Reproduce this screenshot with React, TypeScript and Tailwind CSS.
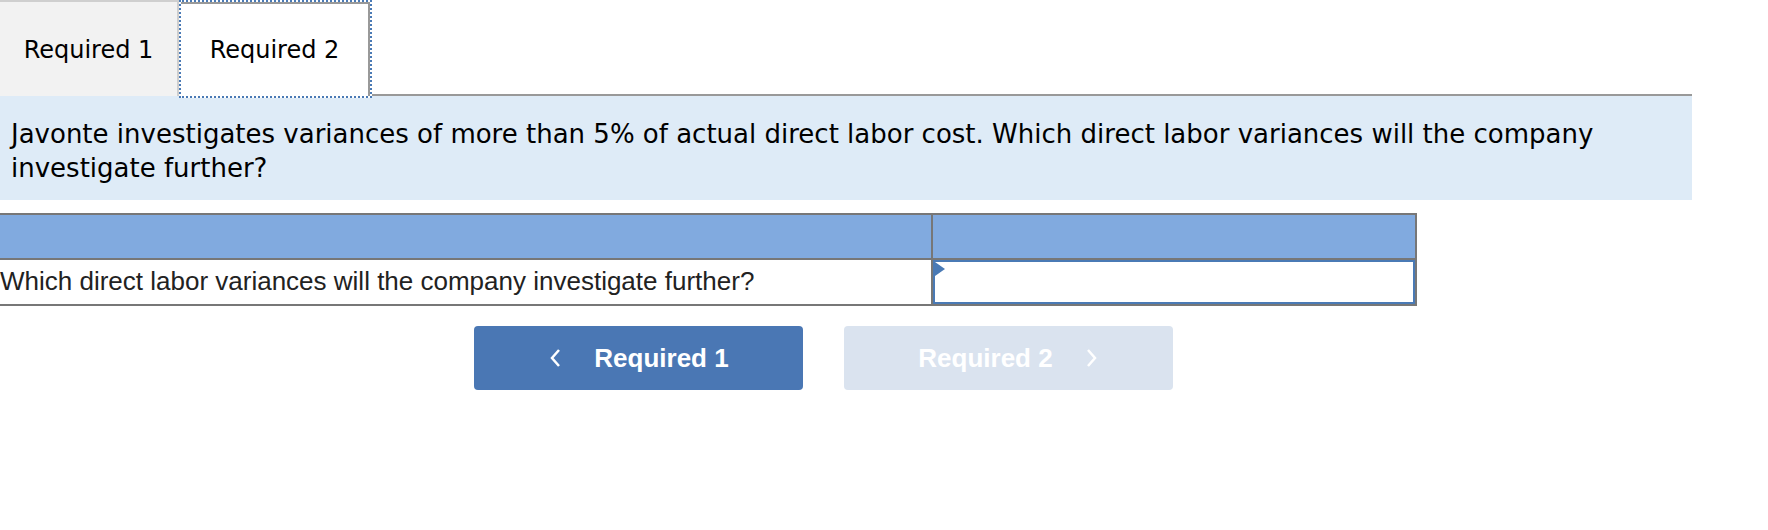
import React from "react";

export default function App() {
  return (
    <div className="w-[1768px] h-[530px] bg-white overflow-hidden font-['DejaVu_Sans',Verdana,sans-serif] text-black">
      <div className="w-[1692px]">
        <div className="flex h-[96px] border-b-2 border-[#999]">
          <div className="w-[179px] h-[96px] bg-[#f2f2f2] border-t-2 border-r-2 border-[#cfcfcf] flex items-center justify-center text-[24px] pt-[2px]">
            Required 1
          </div>
          <div className="w-[193px] h-[98px] bg-white border-2 border-dotted border-[#4a7ab5] flex">
            <div className="flex-1 border-t-2 border-r-2 border-[#999] flex items-center justify-center text-[24px]">
              Required 2
            </div>
          </div>
        </div>
        <div className="bg-[#deebf7] h-[104px] px-[11px] pt-[21px] text-[26px] leading-[34px]">
          Javonte investigates variances of more than 5% of actual direct labor cost. Which direct labor variances will the company investigate further?
        </div>
      </div>
      <div className="mt-[13px] ml-[-3px] w-[1420px] border-2 border-[#777] font-['Liberation_Sans',Arial,sans-serif]">
        <div className="flex h-[45px] bg-[#81aadf] border-b-2 border-[#777]">
          <div className="w-[934px] border-r-2 border-[#777]"></div>
          <div className="flex-1"></div>
        </div>
        <div className="flex h-[44px]">
          <div className="w-[934px] border-r-2 border-[#777] flex items-center text-[26px] text-[#222] pl-[1px] pb-[2px] whitespace-nowrap">
            Which direct labor variances will the company investigate further?
          </div>
          <div className="flex-1 p-0">
            <div className="relative h-full border-2 border-[#4a7ab5] bg-white">
              <svg className="absolute left-0 top-0" width="10" height="14" viewBox="0 0 10 14">
                <polygon points="0,0 10,7 0,14" fill="#4a7ab5" />
              </svg>
            </div>
          </div>
        </div>
      </div>
      <div className="flex gap-[41px] ml-[474px] mt-[20px] font-['Liberation_Sans',Arial,sans-serif]">
        <div className="w-[329px] h-[64px] rounded-[4px] bg-[#4a77b4] flex items-center justify-center text-white font-bold text-[26px]">
          <svg width="14" height="20" viewBox="0 0 14 20" className="mr-[32px]">
            <polyline points="11,2 4,10 11,18" fill="none" stroke="white" strokeWidth="2.5" />
          </svg>
          Required 1
        </div>
        <div className="w-[329px] h-[64px] rounded-[4px] bg-[#dae3ef] flex items-center justify-center text-white font-bold text-[26px]">
          Required 2
          <svg width="14" height="20" viewBox="0 0 14 20" className="ml-[32px]">
            <polyline points="3,2 10,10 3,18" fill="none" stroke="white" strokeWidth="2.5" />
          </svg>
        </div>
      </div>
    </div>
  );
}
